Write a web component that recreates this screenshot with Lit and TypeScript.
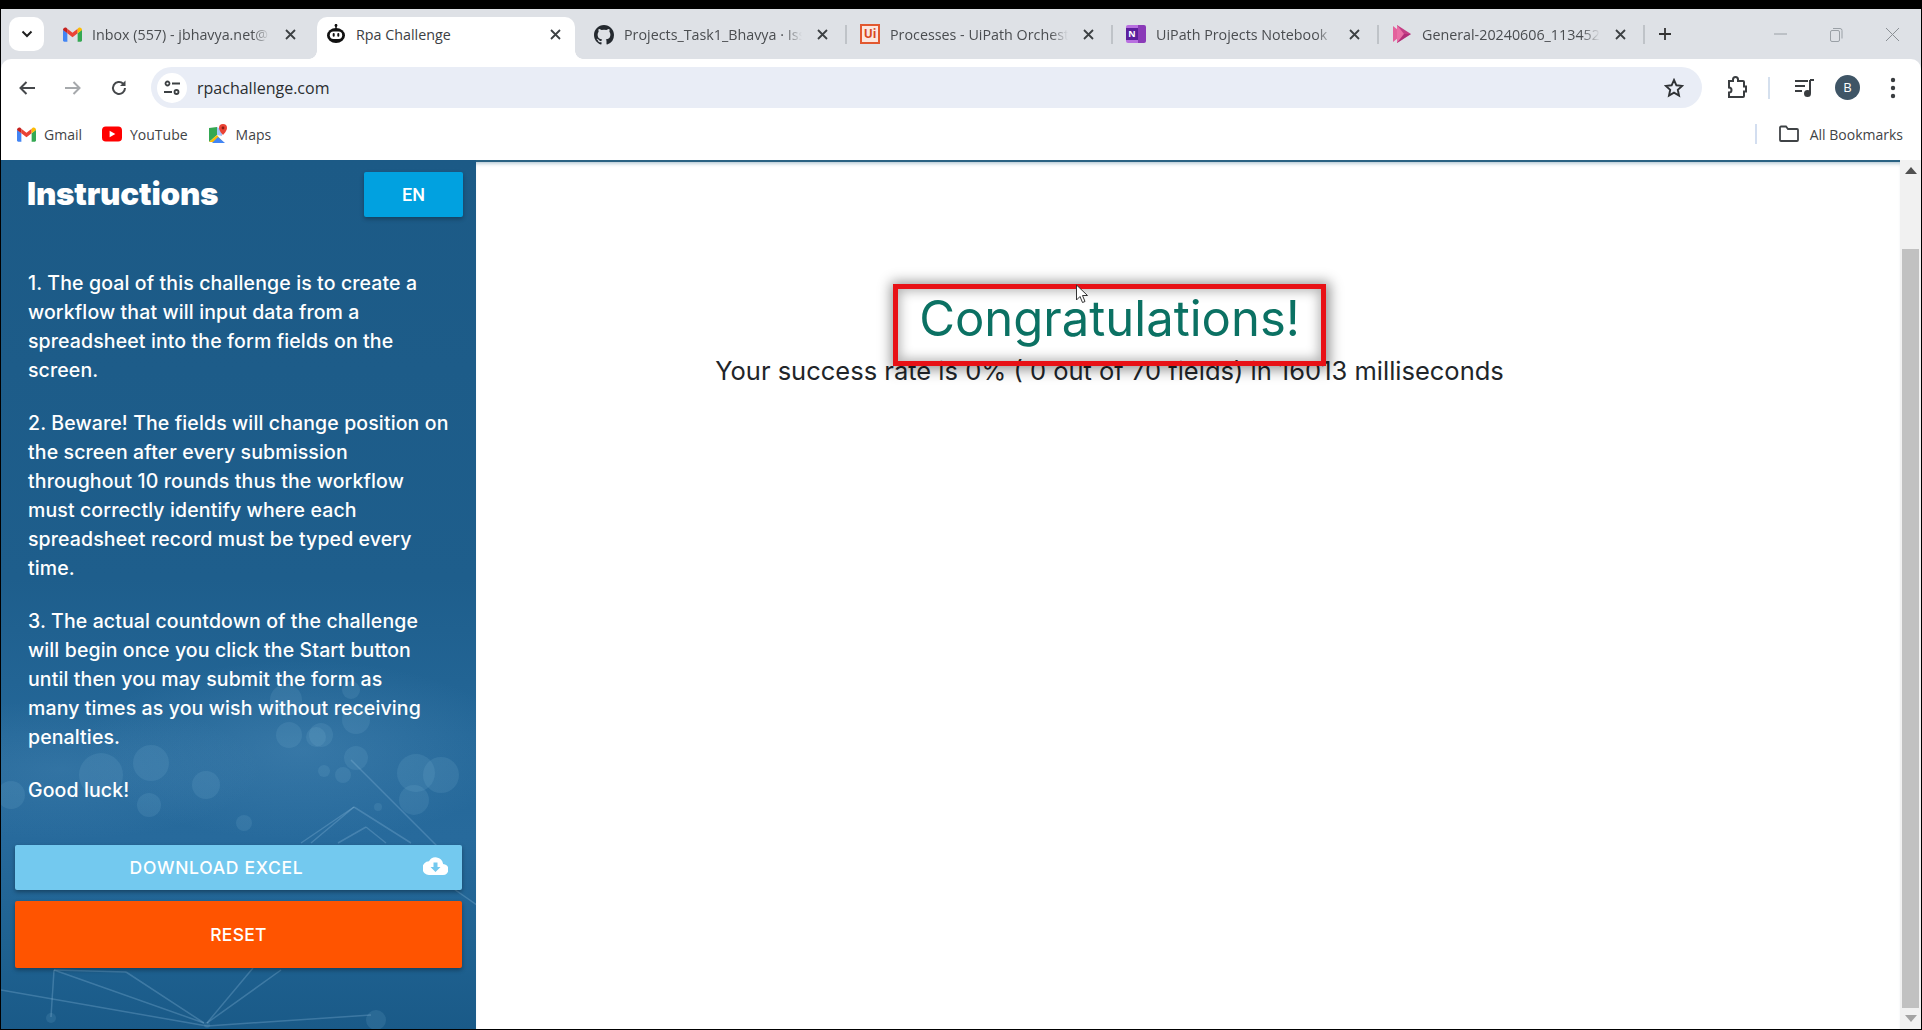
import { LitElement, html, css, svg } from 'lit';
import { customElement } from 'lit/decorators.js';

const gmailIcon = html`<svg viewBox="0 0 24 18" width="19" height="15">
  <path fill="#4285f4" d="M0 3v13.5C0 17.3.7 18 1.5 18H5.500V7.500z"/>
  <path fill="#34a853" d="M24 3v13.500c0 .8-.7 1.500-1.500 1.500H18.500V7.500z"/>
  <path fill="#ea4335" d="M5.500 7.500V1.800L12 6.700l6.500-4.900v5.700L12 12.400z"/>
  <path fill="#c5221f" d="M0 3.200C0 .8 2.700-.7 4.600.8l.9 1v5.700L0 3.200z"/>
  <path fill="#fbbc04" d="M24 3.200C24 .8 21.300-.7 19.400.8l-.9 1v5.700L24 3.200z"/>
</svg>`;

const robotIcon = html`<svg viewBox="0 0 20 20" width="20" height="20">
  <path d="M10 0v5" stroke="#111" stroke-width="1.500"/>
  <circle cx="10" cy="1.500" r="1.400" fill="#111"/>
  <ellipse cx="10" cy="11.500" rx="9" ry="7.500" fill="#111"/>
  <rect x="3.800" y="7.500" width="12.400" height="7.500" rx="3.700" fill="#fff"/>
  <rect x="6.700" y="9" width="2" height="3.800" rx="1" fill="#111"/>
  <rect x="11.300" y="9" width="2" height="3.800" rx="1" fill="#111"/>
</svg>`;

const githubIcon = html`<svg viewBox="0 0 24 24" width="21" height="21">
  <path fill="#24292f" d="M12 .5C5.370.5 0 5.870 0 12.500c0 5.300 3.440 9.800 8.200 11.390.6.110.82-.26.82-.58v-2.030c-3.340.73-4.040-1.610-4.040-1.610-.55-1.390-1.330-1.760-1.330-1.760-1.090-.74.08-.73.08-.73 1.200.09 1.840 1.240 1.840 1.240 1.070 1.830 2.800 1.300 3.490 1 .11-.78.42-1.310.76-1.610-2.670-.3-5.470-1.330-5.470-5.930 0-1.310.47-2.380 1.240-3.220-.13-.3-.54-1.520.12-3.180 0 0 1.010-.32 3.300 1.230a11.500 11.500 0 016 0c2.290-1.550 3.300-1.230 3.300-1.230.66 1.660.25 2.880.12 3.180.77.84 1.240 1.910 1.240 3.220 0 4.610-2.810 5.620-5.480 5.920.43.37.81 1.100.81 2.220v3.290c0 .32.22.7.83.58A12 12 0 0024 12.500C24 5.870 18.630.5 12 .5z"/>
</svg>`;

const uipathIcon = html`<span class="ui-icon">Ui</span>`;

const onenoteIcon = html`<span class="one-icon"><span class="one-n">N</span></span>`;

const streamIcon = html`<svg viewBox="0 0 20 20" width="20" height="20">
  <path fill="#e3619c" d="M1 2l10 8-10 8z"/>
  <path fill="#c43e85" d="M5 1l14 9-14 9z"/>
  <path fill="#ea6fa6" d="M5 1l7 9-7 9z"/>
  <path fill="#a5246f" d="M5 19l7-9 7 0z" opacity=".6"/>
</svg>`;

// titles hold only the part the tab has room for
const tabs = [
  { title: 'Inbox (557) - jbhavya.net@', icon: gmailIcon, active: false },
  { title: 'Rpa Challenge', icon: robotIcon, active: true },
  { title: 'Projects_Task1_Bhavya · Iss', icon: githubIcon, active: false },
  { title: 'Processes - UiPath Orchest', icon: uipathIcon, active: false },
  { title: 'UiPath Projects Notebook', icon: onenoteIcon, active: false },
  { title: 'General-20240606_113452', icon: streamIcon, active: false },
];

// bokeh dots and network lines of the sidebar picture, in page coordinates
const dots = [
  [150, 763, 18], [288, 735, 13], [315, 737, 10], [355, 758, 12], [323, 771, 6], [342, 775, 8],
  [415, 773, 19], [440, 775, 18], [413, 800, 15], [10, 795, 14], [148, 805, 12], [243, 823, 8],
  [377, 807, 4], [205, 785, 14], [375, 1020, 10], [50, 1018, 5], [206, 1025, 3], [355, 720, 14],
  [285, 700, 16], [350, 690, 9], [320, 735, 12], [100, 775, 22],
];
const lines = [
  [353, 807, 410, 843], [353, 807, 310, 843], [365, 827, 337, 843], [365, 827, 385, 843], [353, 807, 300, 843],
  [53, 970, 125, 972], [53, 970, 203, 1023], [125, 972, 203, 1023], [50, 1017, 53, 970],
  [252, 968, 206, 1023], [280, 970, 206, 1023], [0, 990, 206, 1026], [206, 1026, 370, 1015], [440, 880, 476, 905],
  [350, 760, 440, 850],
];

@customElement('app-root')
export class AppRoot extends LitElement {
  static styles = css`
    :host {
      display: block;
      width: 1922px;
      height: 1030px;
      background: #000;
      overflow: hidden;
      font-family: 'Open Sans', 'Liberation Sans', sans-serif;
    }
    .window {
      display: flex;
      flex-direction: column;
      height: 1020px;
      margin: 9px 1px 1px 1px;
      background: #dee1e6;
    }

    /* tab strip */
    .strip {
      display: flex;
      height: 50px;
      padding-top: 8px;
      box-sizing: border-box;
      align-items: flex-start;
    }
    .tab-list {
      width: 35px;
      height: 34px;
      margin-left: 8px;
      margin-right: 7px;
      border-radius: 10px;
      background: #fff;
      display: flex;
      align-items: center;
      justify-content: center;
    }
    .tab {
      position: relative;
      width: 266px;
      height: 42px;
      box-sizing: border-box;
      padding: 0 21px 8px 11px;
      display: flex;
      align-items: center;
      gap: 10px;
      font-size: 14.300px;
      color: #4a4d50;
      flex: none;
    }
    .tab.active {
      background: #fff;
      border-radius: 10px 10px 0 0;
      color: #3c4043;
      padding-left: 9px;
      padding-right: 14px;
      width: 258px;
      margin-right: 8px;
    }
    .tab.active::before,
    .tab.active::after {
      content: '';
      position: absolute;
      bottom: 0;
      width: 8px;
      height: 8px;
    }
    .tab.active::before {
      left: -8px;
      background: radial-gradient(circle at 0 0, transparent 7.500px, #fff 8px);
    }
    .tab.active::after {
      right: -8px;
      background: radial-gradient(circle at 100% 0, transparent 7.500px, #fff 8px);
    }
    .tab:not(.active):not(.before-active)::after {
      content: '';
      position: absolute;
      right: 2px;
      top: 8px;
      width: 2px;
      height: 19px;
      background: #bfc3c8;
    }
    .tab-icon {
      width: 20px;
      height: 20px;
      display: flex;
      align-items: center;
      justify-content: center;
      flex: none;
    }
    .tab-title {
      flex: 1;
      white-space: nowrap;
      min-width: 0;
      -webkit-mask-image: linear-gradient(to right, #000 160px, transparent 178px);
      mask-image: linear-gradient(to right, #000 160px, transparent 178px);
    }
    .tab.active .tab-title {
      -webkit-mask-image: none;
      mask-image: none;
    }
    .ui-icon {
      width: 20px;
      height: 20px;
      box-sizing: border-box;
      border: 2px solid #e2582f;
      background: #fbe6df;
      color: #d8481f;
      font-size: 12px;
      font-weight: 700;
      line-height: 16px;
      text-align: center;
    }
    .one-icon {
      position: relative;
      width: 20px;
      height: 18px;
      background: linear-gradient(to right, #b86fe0 60%, #8a3ab8 60%);
      border-radius: 2px;
    }
    .one-n {
      position: absolute;
      left: 0;
      top: 3px;
      width: 12px;
      height: 12px;
      background: #5c1f9c;
      color: #fff;
      font-size: 9px;
      font-weight: 700;
      line-height: 12px;
      text-align: center;
    }
    .new-tab {
      width: 24px;
      margin-left: 6px;
      margin-top: 10px;
      display: flex;
      justify-content: center;
    }
    .win-btns {
      margin-left: auto;
      padding: 10px 21px 0 0;
      display: flex;
      gap: 41px;
    }

    /* toolbar */
    .toolbar {
      height: 57px;
      background: #fff;
      border-radius: 10px 10px 0 0;
      display: flex;
      align-items: center;
      padding: 0 0 0 17px;
      box-sizing: border-box;
    }
    .nav {
      display: flex;
      align-items: center;
      gap: 28px;
      width: 133px;
      flex: none;
    }
    .address {
      width: 1551px;
      height: 41px;
      flex: none;
      border-radius: 21px;
      background: #e9edf6;
      display: flex;
      align-items: center;
      padding: 0 18px 0 6px;
      box-sizing: border-box;
      font-size: 16px;
      color: #2b2e31;
    }
    .site {
      width: 30px;
      height: 30px;
      border-radius: 50%;
      background: #fff;
      display: flex;
      align-items: center;
      justify-content: center;
      margin-right: 10px;
    }
    .url { flex: 1; }
    .tools {
      display: flex;
      align-items: center;
      flex: 1;
      position: relative;
      padding-left: 24px;
    }
    .tool-sep {
      width: 2px;
      height: 22px;
      background: #d5e0ee;
      margin: 0 25px 0 20px;
    }
    .avatar {
      width: 25px;
      height: 25px;
      border-radius: 50%;
      background: #3f5566;
      color: #fff;
      font-size: 13px;
      text-align: center;
      line-height: 25px;
      margin: 0 30px 0 20px;
      flex: none;
    }

    /* bookmarks */
    .bookmarks {
      height: 44px;
      box-sizing: border-box;
      background: #fff;
      display: flex;
      align-items: center;
      padding: 0 18px 8px 15px;
      font-size: 14px;
      color: #3f4346;
    }
    .mark {
      display: flex;
      align-items: center;
      gap: 8px;
      margin-right: 20px;
    }
    .mark-icon {
      width: 20px;
      display: flex;
      justify-content: center;
    }
    .marks-right {
      margin-left: auto;
      display: flex;
      align-items: center;
    }
    .marks-sep {
      width: 2px;
      height: 20px;
      background: #d3def0;
      margin-right: 22px;
    }
    .marks-right svg { margin-right: 11px; }

    /* page */
    .page {
      flex: 1;
      min-height: 0;
      display: flex;
      background: #fff;
    }
    .sidebar {
      position: relative;
      width: 475px;
      flex: none;
      overflow: hidden;
      background:
        radial-gradient(ellipse 220px 90px at 300px 590px, rgba(120, 175, 215, .22), transparent),
        radial-gradient(ellipse 200px 70px at 60px 610px, rgba(120, 175, 215, .16), transparent),
        linear-gradient(180deg, #1c5a86 0%, #1e5e8c 48%, #246798 66%, #276a9c 78%, #1f6291 90%, #1a5a88 100%);
      box-sizing: border-box;
      padding: 12px 13px 0 14px;
      color: #fff;
      font-family: Inter, 'Liberation Sans', sans-serif;
    }
    .sky {
      position: absolute;
      left: 0;
      top: 0;
      width: 475px;
      height: 870px;
      filter: blur(.6px);
    }
    .side-body { position: relative; }
    .side-head {
      display: flex;
      justify-content: space-between;
      align-items: center;
      padding-left: 12px;
    }
    h1 {
      margin: 0;
      padding-bottom: 2px;
      font-size: 31.400px;
      font-weight: 900;
      letter-spacing: -0.2px;
    }
    .lang {
      width: 99px;
      height: 45px;
      border-radius: 2px;
      background: #01a1e0;
      box-shadow: 0 2px 4px rgba(0, 0, 0, .3);
      text-align: center;
      line-height: 45px;
      font-family: Roboto, sans-serif;
      font-size: 18px;
      font-weight: 500;
    }
    .steps {
      margin: 52px 0 0 0;
      padding-left: 13px;
      font-size: 19.500px;
      font-weight: 500;
      line-height: 29px;
      letter-spacing: 0.12px;
    }
    .steps p { margin: 0 0 24px 0; white-space: nowrap; }
    .btn {
      display: flex;
      align-items: center;
      justify-content: center;
      position: relative;
      width: 447px;
      border-radius: 2px;
      box-shadow: 0 2px 4px rgba(0, 0, 0, .35);
      font-size: 17.500px;
      font-weight: 500;
    }
    .download {
      height: 45px;
      margin-top: 40px;
      background: #73c9ef;
      padding-right: 44px;
      box-sizing: border-box;
      letter-spacing: .7px;
    }
    .cloud { position: absolute; right: 14px; top: 11px; }
    .reset {
      height: 67px;
      margin-top: 11px;
      background: #ff5400;
      letter-spacing: .3px;
    }
    .main {
      position: relative;
      flex: 1;
      display: flex;
      flex-direction: column;
      align-items: center;
      padding: 122px 157px 0 0;
      color: #212529;
      border-top: 2px solid #2a6283;
      box-shadow: inset 0 4px 4px -3px rgba(42, 98, 131, .45);
    }
    .congrats {
      position: relative;
      z-index: 1;
      width: 433px;
      height: 82px;
      box-sizing: border-box;
      border: 5px solid #e81116;
      box-shadow: 1px 1px 12px 3px rgba(0, 0, 0, .42), inset 0 0 12px 2px rgba(0, 0, 0, .3);
      display: flex;
      align-items: center;
      justify-content: center;
      color: #0b7163;
      font-family: Inter, 'Liberation Sans', sans-serif;
      font-size: 49px;
      white-space: nowrap;
      padding-bottom: 14px;
    }
    .rate {
      margin-top: -10px;
      font-family: Inter, 'Liberation Sans', sans-serif;
      font-size: 25.500px;
      line-height: 29px;
      white-space: nowrap;
    }
    .cursor {
      position: absolute;
      left: 600px;
      top: 122px;
      z-index: 2;
    }
    .scrollbar {
      width: 21px;
      flex: none;
      background: #f1f1f1;
      display: flex;
      flex-direction: column;
      align-items: center;
    }
    .arrow { height: 21px; flex: none; display: flex; align-items: center; justify-content: center; }
    .track { flex: 1; width: 100%; padding-top: 68px; box-sizing: border-box; }
    .thumb { height: 100%; margin: 0 2px; background: #c1c1c1; }
  `;

  render() {
    return html`
      <div class="window">
        <div class="strip">
          <div class="tab-list">
            <svg width="12" height="8" viewBox="0 0 12 8"><path d="M1.500 1.500L6 6l4.500-4.500" fill="none" stroke="#1f1f1f" stroke-width="2"/></svg>
          </div>
          ${tabs.map(
            (t, i) => html`
              <div class="tab ${t.active ? 'active' : ''} ${i === 0 ? 'before-active' : ''}">
                <span class="tab-icon">${t.icon}</span>
                <span class="tab-title">${t.title}</span>
                ${this.closeIcon()}
              </div>
            `,
          )}
          <div class="new-tab">
            <svg width="14" height="14" viewBox="0 0 14 14"><path d="M7 1v12M1 7h12" stroke="#333" stroke-width="1.800"/></svg>
          </div>
          <div class="win-btns">
            <svg width="15" height="14" viewBox="0 0 15 14"><path d="M1 7h13" stroke="#9aa0a6"/></svg>
            <svg width="15" height="16" viewBox="0 0 15 16"><rect x="1.500" y="3.500" width="9" height="11" rx="1.500" fill="none" stroke="#9aa0a6"/><path d="M4 1.500h7a2 2 0 012 2v8" fill="none" stroke="#9aa0a6"/></svg>
            <svg width="15" height="15" viewBox="0 0 15 15"><path d="M1 1l13 13M14 1L1 14" stroke="#8a8f94"/></svg>
          </div>
        </div>

        <div class="toolbar">
          <div class="nav">
            <svg width="18" height="16" viewBox="0 0 18 16"><path d="M17 8H3M8.500 2L2.500 8l6 6" fill="none" stroke="#45484b" stroke-width="2"/></svg>
            <svg width="18" height="16" viewBox="0 0 18 16"><path d="M1 8h14M9.500 2l6 6-6 6" fill="none" stroke="#a6a9ac" stroke-width="2"/></svg>
            <svg width="18" height="18" viewBox="0 0 18 18"><path d="M15 9a6 6 0 11-1.800-4.300" fill="none" stroke="#45484b" stroke-width="2"/><path d="M15.500 1.500v5.500H10z" fill="#45484b"/></svg>
          </div>
          <div class="address">
            <span class="site">
              <svg width="18" height="16" viewBox="0 0 18 16" fill="none" stroke="#3c4043" stroke-width="1.800"><circle cx="4.500" cy="3.500" r="2"/><path d="M9 3.500h8M1 12h8"/><circle cx="13.500" cy="12" r="2"/></svg>
            </span>
            <span class="url">rpachallenge.com</span>
            <svg width="20" height="20" viewBox="0 0 20 20"><path d="M10 2l2.400 5.300 5.700.6-4.300 3.900 1.200 5.700L10 14.600l-5 2.900 1.200-5.700-4.300-3.900 5.700-.6z" fill="none" stroke="#2f3235" stroke-width="1.900"/></svg>
          </div>
          <div class="tools">
            <svg width="22" height="24" viewBox="0 0 22 24"><path d="M3 5h4V3.500a2.500 2.500 0 015 0V5h5a1 1 0 011 1v4.500h2v5h-2V20a1 1 0 01-1 1H3v-4.500a2.500 2.500 0 000-5z" fill="none" stroke="#3a3d40" stroke-width="2"/></svg>
            <span class="tool-sep"></span>
            <svg width="20" height="20" viewBox="0 0 20 20" fill="none" stroke="#3a3d40" stroke-width="2"><path d="M0 3h13M0 8h10M0 13h7"/><path d="M15 2h4M15 2v13"/><circle cx="12.500" cy="15.500" r="2.500" fill="#3a3d40"/></svg>
            <span class="avatar">B</span>
            <svg width="6" height="22" viewBox="0 0 6 22" fill="#3a3d40"><circle cx="3" cy="3" r="2.200"/><circle cx="3" cy="11" r="2.200"/><circle cx="3" cy="19" r="2.200"/></svg>
          </div>
        </div>

        <div class="bookmarks">
          <span class="mark"><span class="mark-icon">${gmailIcon}</span>Gmail</span>
          <span class="mark">
            <span class="mark-icon">
              <svg width="21" height="16" viewBox="0 0 21 16"><rect width="21" height="16" rx="4" fill="#f00"/><path d="M8 4.500l6 3.500-6 3.500z" fill="#fff"/></svg>
            </span>YouTube
          </span>
          <span class="mark">
            <span class="mark-icon">
              <svg width="20" height="20" viewBox="0 0 20 20">
                <path fill="#34a853" d="M1 4l8-1v8l-8 7z"/>
                <path fill="#fbbc04" d="M1 18l8-7 6 7z"/>
                <path fill="#4285f4" d="M4 19l6-6 7 6z"/>
                <path fill="#a8c7fa" d="M9 3l5 3v6l-5-1z"/>
                <path fill="#ea4335" d="M15 0a4 4 0 014 4c0 3-4 7-4 7s-4-4-4-7a4 4 0 014-4z"/>
                <circle cx="15" cy="4" r="1.400" fill="#8d1c14"/>
              </svg>
            </span>Maps
          </span>
          <span class="marks-right">
            <span class="marks-sep"></span>
            <svg width="20" height="18" viewBox="0 0 20 18"><path d="M1 2.500a1 1 0 011-1h5l2 2.500h9a1 1 0 011 1V15a1 1 0 01-1 1H2a1 1 0 01-1-1z" fill="none" stroke="#3f4346" stroke-width="1.800"/></svg>
            All Bookmarks
          </span>
        </div>

        <div class="page">
          <div class="sidebar">
            <svg class="sky" viewBox="0 160 475 870">
              ${dots.map(
                ([x, y, r]) => svg`<circle cx=${x} cy=${y} r=${r} fill="#7fb2d6" opacity=".16"/>`,
              )}
              ${lines.map(
                ([a, b, c, d]) => svg`<line x1=${a} y1=${b} x2=${c} y2=${d} stroke="#8dbbdc" stroke-width="1.500" opacity=".3"/>`,
              )}
            </svg>
            <div class="side-body">
              <div class="side-head">
                <h1>Instructions</h1>
                <span class="lang">EN</span>
              </div>
              <div class="steps">
                <p>1. The goal of this challenge is to create a<br>workflow that will input data from a<br>spreadsheet into the form fields on the<br>screen.</p>
                <p>2. Beware! The fields will change position on<br>the screen after every submission<br>throughout 10 rounds thus the workflow<br>must correctly identify where each<br>spreadsheet record must be typed every<br>time.</p>
                <p>3. The actual countdown of the challenge<br>will begin once you click the Start button<br>until then you may submit the form as<br>many times as you wish without receiving<br>penalties.</p>
                <p>Good luck!</p>
              </div>
              <div class="btn download">
                DOWNLOAD EXCEL
                <svg class="cloud" width="25" height="19" viewBox="0 0 25 19">
                  <path fill="#fff" d="M20 7.500A7.500 7.500 0 006 5.300 6.500 6.500 0 006.500 19h13.500a5.500 5.500 0 000-11z"/>
                  <path fill="#73c9ef" d="M10.500 6.500h4v4.500h3l-5 5-5-5h3z"/>
                </svg>
              </div>
              <div class="btn reset">RESET</div>
            </div>
          </div>
          <div class="main">
            <div class="congrats">Congratulations!</div>
            <div class="rate">Your success rate is 0% ( 0 out of 70 fields) in 16013 milliseconds</div>
            <svg class="cursor" width="12" height="20" viewBox="0 0 12 19"><path d="M.5.5v15l3.500-3.500 2.500 6 2.500-1-2.500-6h5z" fill="#fff" stroke="#333" stroke-width="1"/></svg>
          </div>
          <div class="scrollbar">
            <div class="arrow"><svg width="12" height="7" viewBox="0 0 12 7"><path d="M6 0l6 7H0z" fill="#505050"/></svg></div>
            <div class="track"><div class="thumb"></div></div>
            <div class="arrow"><svg width="12" height="7" viewBox="0 0 12 7"><path d="M6 7L0 0h12z" fill="#a3a3a3"/></svg></div>
          </div>
        </div>
      </div>
    `;
  }

  closeIcon() {
    return html`<svg width="11" height="11" viewBox="0 0 11 11" style="flex:none"><path d="M1 1l9 9M10 1l-9 9" stroke="#3c4043" stroke-width="1.800"/></svg>`;
  }
}
